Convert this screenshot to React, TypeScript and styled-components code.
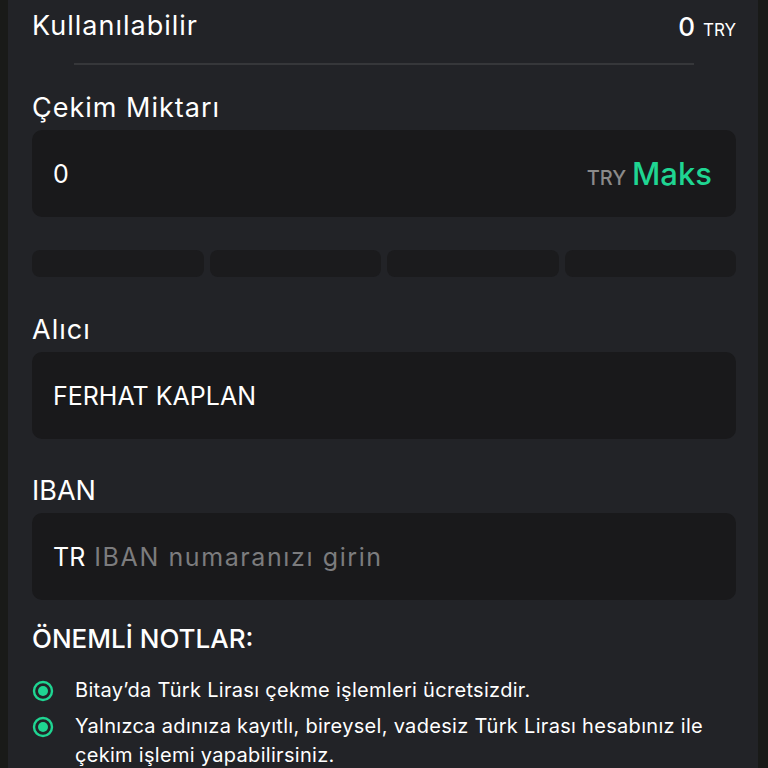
import styled, { createGlobalStyle } from 'styled-components'

const GREEN = '#1fd592'

const GlobalStyle = createGlobalStyle`
  html, body {
    margin: 0;
    padding: 0;
    background: #191a18;
  }
  body {
    font-family: 'Inter', 'Noto Sans', sans-serif;
    color: #ffffff;
  }
`

const notes = [
  'Bitay’da Türk Lirası çekme işlemleri ücretsizdir.',
  'Yalnızca adınıza kayıtlı, bireysel, vadesiz Türk Lirası hesabınız ile çekim işlemi yapabilirsiniz.',
]

function RadioDot() {
  return (
    <svg width="22" height="22" viewBox="0 0 22 22">
      <circle cx="11" cy="11" r="9" fill="none" stroke={GREEN} strokeWidth="2.4" />
      <circle cx="11" cy="11" r="5" fill={GREEN} />
    </svg>
  )
}

export default function App() {
  return (
    <Page>
      <GlobalStyle />
      <Panel>
        <BalanceRow>
          <Label>Kullanılabilir</Label>
          <Balance>
            <BalanceValue>0</BalanceValue>
            <BalanceUnit>TRY</BalanceUnit>
          </Balance>
        </BalanceRow>
        <Divider />

        <Field $first>
          <Label>Çekim Miktarı</Label>
          <InputBox>
            <InputValue>0</InputValue>
            <Suffix>
              <Currency>TRY</Currency>
              <MaxButton>Maks</MaxButton>
            </Suffix>
          </InputBox>
        </Field>

        <Segments>
          {[0, 1, 2, 3].map((i) => (
            <Segment key={i} />
          ))}
        </Segments>

        <Field>
          <Label>Alıcı</Label>
          <InputBox>
            <InputValue>FERHAT KAPLAN</InputValue>
          </InputBox>
        </Field>

        <Field>
          <Label $caps>IBAN</Label>
          <InputBox>
            <InputValue>
              TR <Placeholder>IBAN numaranızı girin</Placeholder>
            </InputValue>
          </InputBox>
        </Field>

        <NotesTitle>ÖNEMLİ NOTLAR:</NotesTitle>
        <NoteList>
          {notes.map((n) => (
            <NoteItem key={n}>
              <NoteIcon>
                <RadioDot />
              </NoteIcon>
              <NoteText>{n}</NoteText>
            </NoteItem>
          ))}
        </NoteList>
      </Panel>
    </Page>
  )
}

const Page = styled.div`
  width: 768px;
  height: 768px;
  overflow: hidden;
  background: #191a18;
`
const Panel = styled.div`
  margin-left: 8px;
  width: 750px;
  min-height: 768px;
  box-sizing: border-box;
  padding: 8px 22px 0 24px;
  background: #222327;
  display: flex;
  flex-direction: column;
  & > * {
    flex-shrink: 0;
  }
`
const BalanceRow = styled.div`
  display: flex;
  justify-content: space-between;
  align-items: center;
  height: 36px;
`
const Label = styled.div<{ $caps?: boolean }>`
  font-size: 27px;
  line-height: 36px;
  font-weight: 400;
  color: #ffffff;
  letter-spacing: ${(p) => (p.$caps ? '0' : '1px')};
`
const Balance = styled.div`
  display: flex;
  align-items: baseline;
  gap: 8px;
`
const BalanceValue = styled.span`
  font-size: 26px;
  font-weight: 500;
`
const BalanceUnit = styled.span`
  font-size: 17px;
  font-weight: 400;
`
const Divider = styled.div`
  height: 2px;
  background: #36373a;
  margin: 19px 42px 0 42px;
`
const Field = styled.div<{ $first?: boolean }>`
  display: flex;
  flex-direction: column;
  gap: 4px;
  margin-top: ${(p) => (p.$first ? '25px' : '34px')};
`
const InputBox = styled.div`
  height: 87px;
  border-radius: 10px;
  background: #19191b;
  display: flex;
  align-items: center;
  justify-content: space-between;
  padding: 0 24px 0 21px;
`
const InputValue = styled.div`
  font-size: 25px;
  font-weight: 400;
  color: #ffffff;
`
const Placeholder = styled.span`
  color: #7c7c7e;
  letter-spacing: 1.6px;
  margin-left: 2px;
`
const Suffix = styled.div`
  display: flex;
  align-items: baseline;
  gap: 6px;
`
const Currency = styled.span`
  font-size: 20px;
  color: #8a8a8a;
  font-weight: 500;
`
const MaxButton = styled.span`
  font-size: 31px;
  color: ${GREEN};
  font-weight: 500;
`
const Segments = styled.div`
  display: grid;
  grid-template-columns: repeat(4, 1fr);
  gap: 6px;
  margin-top: 33px;
  margin-bottom: 1px;
`
const Segment = styled.div`
  height: 27px;
  border-radius: 8px;
  background: #1b1b1d;
`
const NotesTitle = styled.div`
  margin-top: 21px;
  font-size: 26px;
  line-height: 36px;
  font-weight: 500;
`
const NoteList = styled.ul`
  list-style: none;
  margin: 19px 0 0 0;
  padding: 0;
  display: flex;
  flex-direction: column;
  gap: 7px;
`
const NoteItem = styled.li`
  display: flex;
  gap: 21px;
`
const NoteIcon = styled.div`
  width: 22px;
  height: 29px;
  display: flex;
  align-items: center;
  flex-shrink: 0;
`
const NoteText = styled.div`
  font-size: 20px;
  line-height: 29px;
  letter-spacing: 0.3px;
  color: #ffffff;
  max-width: 640px;
`
